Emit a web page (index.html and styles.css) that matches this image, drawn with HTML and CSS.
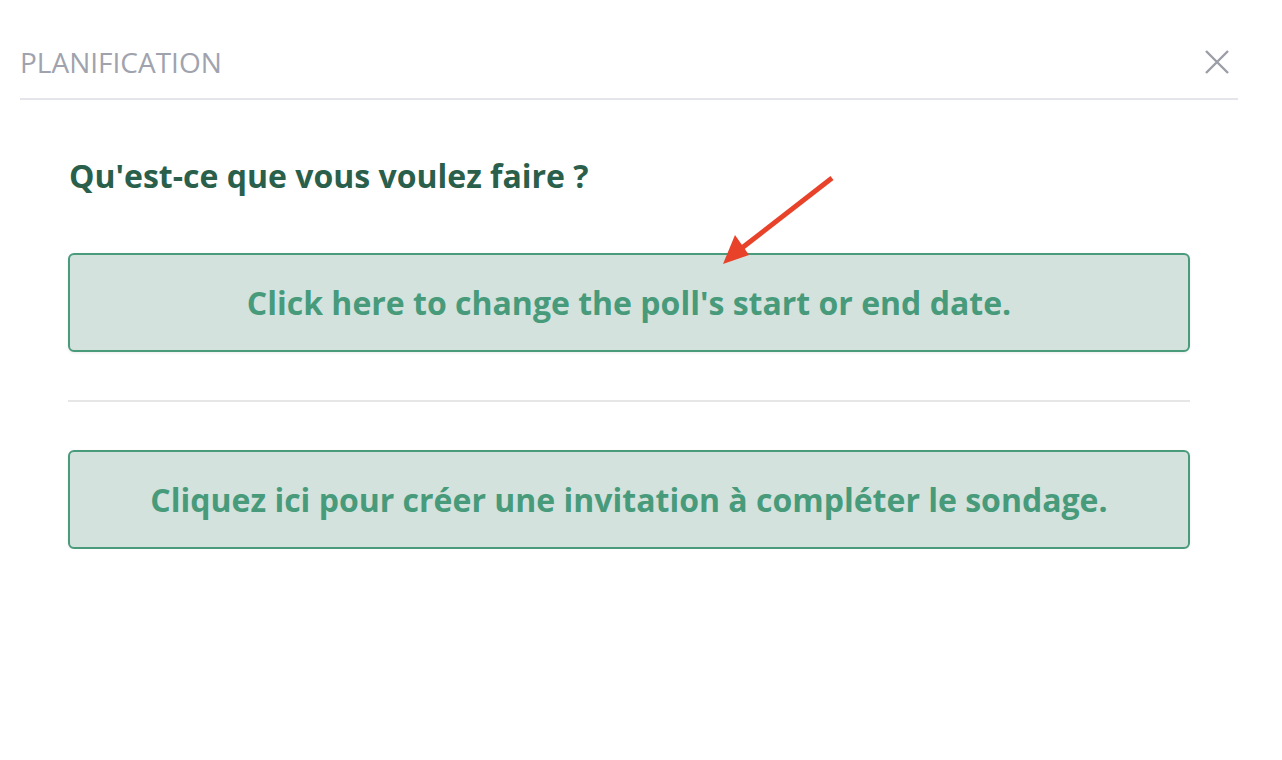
FILE: index.html
```html
<!DOCTYPE html>
<html lang="fr">
<head>
<meta charset="utf-8">
<title>Planification</title>
<link rel="stylesheet" href="styles.css">
</head>
<body>
<div class="modal">
  <header class="modal-header">
    <h1 class="modal-title">PLANIFICATION</h1>
    <button class="close" aria-label="Fermer">
      <svg width="26" height="26" viewBox="0 0 26 26"><path d="M2 2 L24 24 M24 2 L2 24" stroke="#9b9da7" stroke-width="2.4" fill="none"/></svg>
    </button>
  </header>
  <div class="modal-body">
    <h2 class="question">Qu'est-ce que vous voulez faire ?</h2>
    <button class="choice">Click here to change the poll's start or end date.</button>
    <hr class="sep">
    <button class="choice">Cliquez ici pour créer une invitation à compléter le sondage.</button>
  </div>
  <svg class="arrow" width="140" height="110" viewBox="0 0 140 110">
    <line x1="132" y1="7" x2="38" y2="80" stroke="#e8432a" stroke-width="5" stroke-linecap="butt"/>
    <polygon points="23,93 35,64 49,84" fill="#e8432a"/>
  </svg>
</div>
</body>
</html>
```
FILE: styles.css
```css
html, body {
  margin: 0;
  padding: 0;
  background: #ffffff;
}
body {
  font-family: "Open Sans", "Liberation Sans", sans-serif;
}
.modal {
  position: relative;
  margin: 0 44px 0 20px;
}
.modal-header {
  display: flex;
  align-items: center;
  justify-content: space-between;
  box-sizing: border-box;
  height: 100px;
  padding-top: 26px;
  border-bottom: 2px solid #e4e5ea;
}
.modal-title {
  margin: 0;
  font-size: 28px;
  font-weight: 400;
  color: #a0a3ae;
  letter-spacing: 0;
}
.close {
  background: none;
  border: 0;
  padding: 0;
  margin-right: 8px;
  width: 26px;
  height: 26px;
  display: flex;
  cursor: pointer;
}
.modal-body {
  padding: 56px 48px 0 48px;
}
.question {
  margin: 0 0 57px 1px;
  font-size: 32px;
  font-weight: 700;
  color: #2a5f4b;
  line-height: 40px;
}
.choice {
  display: block;
  width: 100%;
  height: 99px;
  box-sizing: border-box;
  background: #d3e2dd;
  border: 2px solid #4a9b7c;
  border-radius: 6px;
  box-shadow: 0 1px 3px rgba(0,0,0,0.08);
  font-family: "Open Sans", "Liberation Sans", sans-serif;
  font-size: 32px;
  font-weight: 700;
  color: #479b7b;
  cursor: pointer;
}
.sep {
  margin: 48px 0 48px 0;
  border: 0;
  border-top: 2px solid #e6e6e6;
  height: 0;
}
.arrow {
  position: absolute;
  left: 680px;
  top: 171px;
}
```
